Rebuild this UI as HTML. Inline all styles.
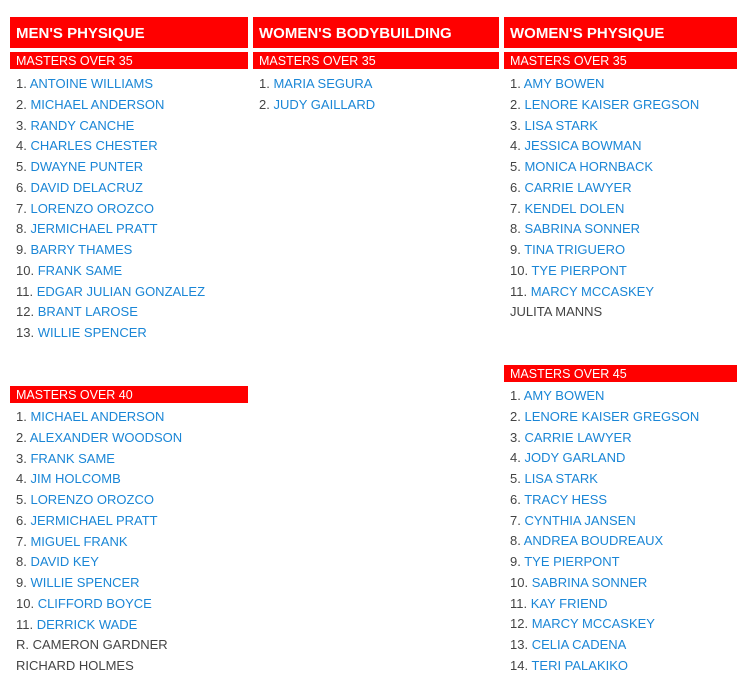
<!DOCTYPE html>
<html><head><meta charset="utf-8"><style>
body{margin:0;width:750px;height:693px;background:#fff;font-family:"Liberation Sans",sans-serif;position:relative;overflow:hidden}
.h{position:absolute;top:17px;height:31px;background:#f00;color:#fff;font-weight:bold;font-size:15px;line-height:34px;padding-left:6px;box-sizing:border-box}
.s{position:absolute;height:17px;background:#f00;color:#fff;font-size:12.5px;line-height:19px;padding-left:6px;box-sizing:border-box}
.l{position:absolute;font-size:13px;color:#444;line-height:20.75px}
.l div{white-space:nowrap}
.l span{color:#1a86d6}
</style></head><body>
<div class="h" style="left:10px;width:238px">MEN'S PHYSIQUE</div>
<div class="h" style="left:253px;width:246px">WOMEN'S BODYBUILDING</div>
<div class="h" style="left:504px;width:233px">WOMEN'S PHYSIQUE</div>
<div class="s" style="left:10px;width:238px;top:52px">MASTERS OVER 35</div>
<div class="s" style="left:253px;width:246px;top:52px">MASTERS OVER 35</div>
<div class="s" style="left:504px;width:233px;top:52px">MASTERS OVER 35</div>
<div class="l" style="left:16px;top:74px">
<div>1. <span>ANTOINE WILLIAMS</span></div><div>2. <span>MICHAEL ANDERSON</span></div><div>3. <span>RANDY CANCHE</span></div><div>4. <span>CHARLES CHESTER</span></div><div>5. <span>DWAYNE PUNTER</span></div><div>6. <span>DAVID DELACRUZ</span></div><div>7. <span>LORENZO OROZCO</span></div><div>8. <span>JERMICHAEL PRATT</span></div><div>9. <span>BARRY THAMES</span></div><div>10. <span>FRANK SAME</span></div><div>11. <span>EDGAR JULIAN GONZALEZ</span></div><div>12. <span>BRANT LAROSE</span></div><div>13. <span>WILLIE SPENCER</span></div>
</div>
<div class="l" style="left:259px;top:74px">
<div>1. <span>MARIA SEGURA</span></div><div>2. <span>JUDY GAILLARD</span></div>
</div>
<div class="l" style="left:510px;top:74px">
<div>1. <span>AMY BOWEN</span></div><div>2. <span>LENORE KAISER GREGSON</span></div><div>3. <span>LISA STARK</span></div><div>4. <span>JESSICA BOWMAN</span></div><div>5. <span>MONICA HORNBACK</span></div><div>6. <span>CARRIE LAWYER</span></div><div>7. <span>KENDEL DOLEN</span></div><div>8. <span>SABRINA SONNER</span></div><div>9. <span>TINA TRIGUERO</span></div><div>10. <span>TYE PIERPONT</span></div><div>11. <span>MARCY MCCASKEY</span></div><div>JULITA MANNS</div>
</div>
<div class="s" style="left:10px;width:238px;top:386px">MASTERS OVER 40</div>
<div class="l" style="left:16px;top:407px">
<div>1. <span>MICHAEL ANDERSON</span></div><div>2. <span>ALEXANDER WOODSON</span></div><div>3. <span>FRANK SAME</span></div><div>4. <span>JIM HOLCOMB</span></div><div>5. <span>LORENZO OROZCO</span></div><div>6. <span>JERMICHAEL PRATT</span></div><div>7. <span>MIGUEL FRANK</span></div><div>8. <span>DAVID KEY</span></div><div>9. <span>WILLIE SPENCER</span></div><div>10. <span>CLIFFORD BOYCE</span></div><div>11. <span>DERRICK WADE</span></div><div>R. CAMERON GARDNER</div><div>RICHARD HOLMES</div>
</div>
<div class="s" style="left:504px;width:233px;top:365px">MASTERS OVER 45</div>
<div class="l" style="left:510px;top:386px">
<div>1. <span>AMY BOWEN</span></div><div>2. <span>LENORE KAISER GREGSON</span></div><div>3. <span>CARRIE LAWYER</span></div><div>4. <span>JODY GARLAND</span></div><div>5. <span>LISA STARK</span></div><div>6. <span>TRACY HESS</span></div><div>7. <span>CYNTHIA JANSEN</span></div><div>8. <span>ANDREA BOUDREAUX</span></div><div>9. <span>TYE PIERPONT</span></div><div>10. <span>SABRINA SONNER</span></div><div>11. <span>KAY FRIEND</span></div><div>12. <span>MARCY MCCASKEY</span></div><div>13. <span>CELIA CADENA</span></div><div>14. <span>TERI PALAKIKO</span></div>
</div>
</body></html>
